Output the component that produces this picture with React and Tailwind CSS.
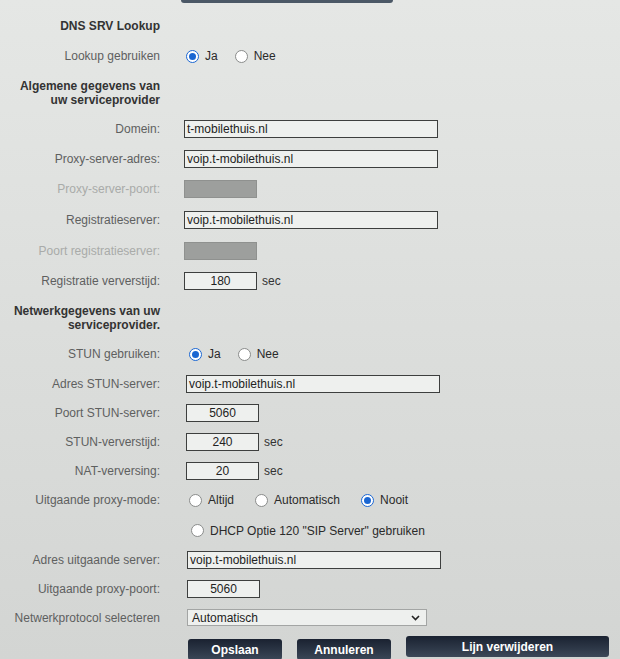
const FONT = { fontFamily: '"Liberation Sans", Arial, sans-serif' };

const Label = ({ children, disabled }) => (
  <div
    className={`w-[160px] shrink-0 text-right text-[12px] ${
      disabled ? 'text-[#a9aba9]' : 'text-[#5e605f]'
    }`}
  >
    {children}
  </div>
);

const Heading = ({ lines, className = '' }) => (
  <div className={`flex items-center ${className}`}>
    <div className="w-[160px] shrink-0 text-right text-[12px] font-bold leading-[14px] text-[#333]">
      {lines.map((l) => (
        <div key={l}>{l}</div>
      ))}
    </div>
  </div>
);

const Row = ({ label, disabled, children, className = 'h-[30px]' }) => (
  <div className={`flex items-center ${className}`}>
    <Label disabled={disabled}>{label}</Label>
    <div className="ml-[24px] flex items-center">{children}</div>
  </div>
);

const TextBox = ({ value, wide = true, center }) => (
  <div
    className={`flex h-[18px] items-center border border-[#3d3f3e] bg-[#eef0ee] px-[2px] text-[12px] text-[#222] ${
      wide ? 'w-[254px]' : 'w-[73px]'
    } ${center ? 'justify-center' : ''}`}
  >
    {value}
  </div>
);

const Disabled = () => (
  <div className="h-[18px] w-[73px] border border-[#8f918f] bg-[#9d9f9d]" />
);

const Radio = ({ checked, label }) => (
  <div className="flex items-center gap-[6px]">
    <span
      className={`flex h-[13px] w-[13px] items-center justify-center rounded-full border bg-white ${
        checked ? 'border-[#1a66d2]' : 'border-[#8a8c8b]'
      }`}
    >
      {checked && <span className="h-[7px] w-[7px] rounded-full bg-[#1a66d2]" />}
    </span>
    <span className="text-[12px] text-[#2a2a2a]">{label}</span>
  </div>
);

const Sec = () => <span className="ml-[5px] text-[12px] text-[#333]">sec</span>;

const Button = ({ children, className = '' }) => (
  <button
    type="button"
    className={`h-[21px] rounded-[3px] bg-gradient-to-b from-[#1a2231] to-[#3c4858] text-[12px] font-bold text-white ${className}`}
  >
    {children}
  </button>
);

export default function App() {
  return (
    <div
      className="h-[659px] w-[620px] overflow-hidden bg-gradient-to-b from-[#e5e7e5] to-[#d3d5d3]"
      style={FONT}
    >
      <div className="ml-[181px] h-[3px] w-[212px] rounded-b-[3px] bg-[#4b5866]" />

      <div className="mt-[8px]">
        <Heading lines={['DNS SRV Lookup']} className="h-[30px]" />
        <Row label="Lookup gebruiken">
          <div className="ml-[2px] flex items-center gap-[17px]">
            <Radio checked label="Ja" />
            <Radio label="Nee" />
          </div>
        </Row>
        <Heading
          lines={['Algemene gegevens van', 'uw serviceprovider']}
          className="h-[43px]"
        />
        <Row label="Domein:">
          <TextBox value="t-mobilethuis.nl" />
        </Row>
        <Row label="Proxy-server-adres:">
          <TextBox value="voip.t-mobilethuis.nl" />
        </Row>
        <Row label="Proxy-server-poort:" disabled>
          <Disabled />
        </Row>
        <Row label="Registratieserver:" className="h-[31px]">
          <TextBox value="voip.t-mobilethuis.nl" />
        </Row>
        <Row label="Poort registratieserver:" disabled className="h-[31px]">
          <Disabled />
        </Row>
        <Row label="Registratie ververstijd:">
          <TextBox value="180" wide={false} center />
          <Sec />
        </Row>
        <Heading
          lines={['Netwerkgegevens van uw', 'serviceprovider.']}
          className="h-[43px]"
        />
        <Row label="STUN gebruiken:">
          <div className="ml-[5px] flex items-center gap-[17px]">
            <Radio checked label="Ja" />
            <Radio label="Nee" />
          </div>
        </Row>
        <Row label="Adres STUN-server:" className="h-[29px]">
          <div className="ml-[2px]">
            <TextBox value="voip.t-mobilethuis.nl" />
          </div>
        </Row>
        <Row label="Poort STUN-server:" className="h-[29px]">
          <div className="ml-[2px]">
            <TextBox value="5060" wide={false} center />
          </div>
        </Row>
        <Row label="STUN-ververstijd:" className="h-[29px]">
          <div className="ml-[2px]">
            <TextBox value="240" wide={false} center />
          </div>
          <Sec />
        </Row>
        <Row label="NAT-verversing:" className="h-[29px]">
          <div className="ml-[2px]">
            <TextBox value="20" wide={false} center />
          </div>
          <Sec />
        </Row>
        <Row label="Uitgaande proxy-mode:">
          <div className="ml-[5px] flex items-center gap-[21px]">
            <Radio label="Altijd" />
            <Radio label="Automatisch" />
            <Radio checked label="Nooit" />
          </div>
        </Row>
        <Row label="" className="h-[31px]">
          <div className="ml-[7px]">
            <Radio label={'DHCP Optie 120 "SIP Server" gebruiken'} />
          </div>
        </Row>
        <Row label="Adres uitgaande server:" className="h-[28px]">
          <div className="ml-[3px]">
            <TextBox value="voip.t-mobilethuis.nl" />
          </div>
        </Row>
        <Row label="Uitgaande proxy-poort:" className="h-[29px]">
          <div className="ml-[3px]">
            <TextBox value="5060" wide={false} center />
          </div>
        </Row>
        <Row label="Netwerkprotocol selecteren" className="h-[29px]">
          <div className="ml-[3px] flex h-[17px] w-[240px] items-center justify-between border border-[#a3a5a4] bg-[#eef0ee] pl-[4px] pr-[6px] text-[12px] text-[#222]">
            <span>Automatisch</span>
            <svg width="9" height="6" viewBox="0 0 9 6" fill="none">
              <path d="M1 1l3.5 3.5L8 1" stroke="#222" strokeWidth="1.6" />
            </svg>
          </div>
        </Row>
        <div className="mt-[7px] flex items-start pl-[188px]">
          <Button className="w-[94px]">Opslaan</Button>
          <Button className="ml-[15px] w-[94px]">Annuleren</Button>
          <Button className="-mt-[3px] ml-[15px] w-[203px]">Lijn verwijderen</Button>
        </div>
      </div>
    </div>
  );
}
